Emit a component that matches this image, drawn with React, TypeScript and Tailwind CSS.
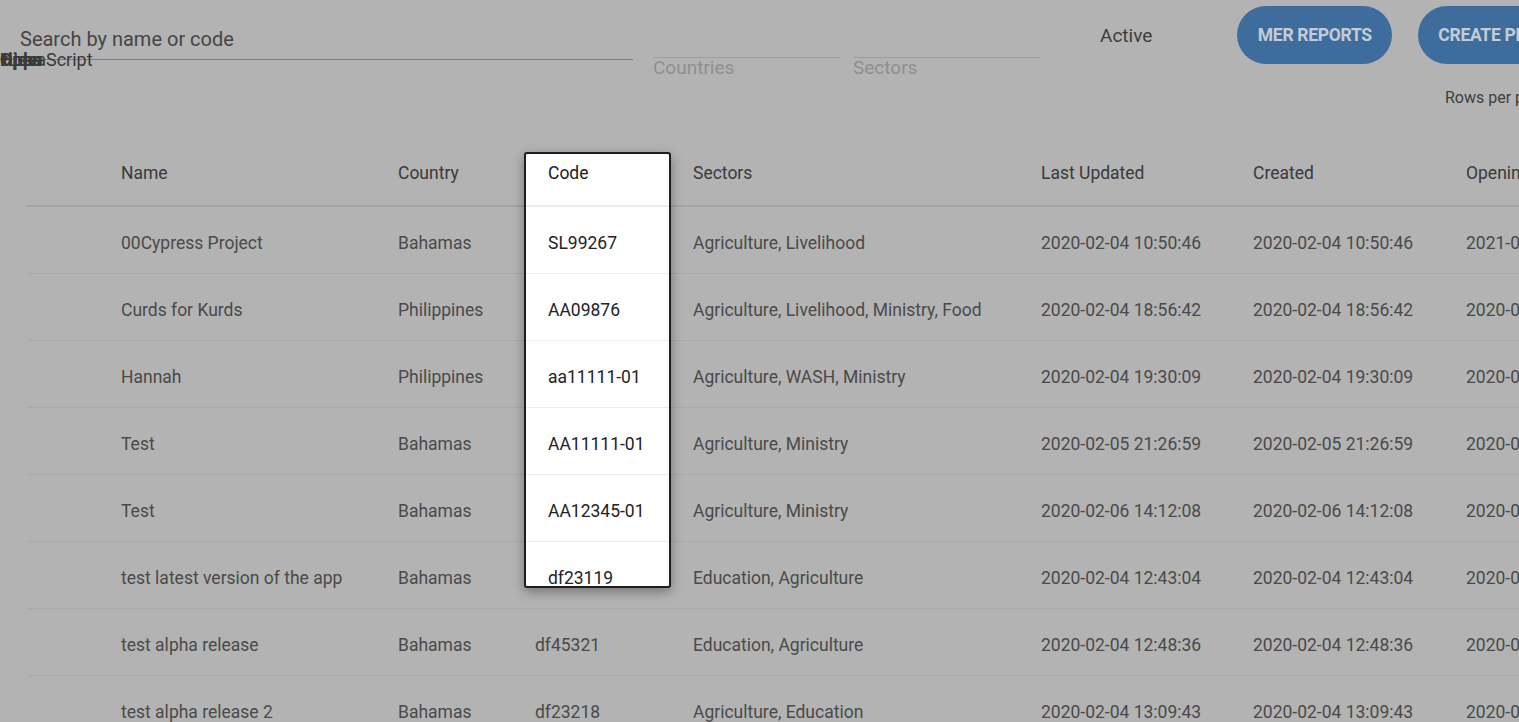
const rows = [
  ["00Cypress Project", "Bahamas", "SL99267", "Agriculture, Livelihood", "2020-02-04 10:50:46", "2020-02-04 10:50:46", "2021-02-04"],
  ["Curds for Kurds", "Philippines", "AA09876", "Agriculture, Livelihood, Ministry, Food", "2020-02-04 18:56:42", "2020-02-04 18:56:42", "2020-02-04"],
  ["Hannah", "Philippines", "aa11111-01", "Agriculture, WASH, Ministry", "2020-02-04 19:30:09", "2020-02-04 19:30:09", "2020-02-04"],
  ["Test", "Bahamas", "AA11111-01", "Agriculture, Ministry", "2020-02-05 21:26:59", "2020-02-05 21:26:59", "2020-02-05"],
  ["Test", "Bahamas", "AA12345-01", "Agriculture, Ministry", "2020-02-06 14:12:08", "2020-02-06 14:12:08", "2020-02-06"],
  ["test latest version of the app", "Bahamas", "df23119", "Education, Agriculture", "2020-02-04 12:43:04", "2020-02-04 12:43:04", "2020-02-04"],
  ["test alpha release", "Bahamas", "df45321", "Education, Agriculture", "2020-02-04 12:48:36", "2020-02-04 12:48:36", "2020-02-04"],
  ["test alpha release 2", "Bahamas", "df23218", "Agriculture, Education", "2020-02-04 13:09:43", "2020-02-04 13:09:43", "2020-02-04"],
];

const headers = ["Name", "Country", "Code", "Sectors", "Last Updated", "Created", "Opening Date"];

// column grid: spacer, name, country, code, sectors, last updated, created, opening
const cols = "grid grid-cols-[78px_277px_137px_158px_348px_212px_213px_200px]";

export default function App() {
  return (
    <div className="relative w-[1519px] h-[722px] overflow-hidden bg-[#b3b3b3] font-['Roboto',sans-serif]">
      {/* filter bar */}
      <div className="flex items-start h-[140px]">
        {/* search */}
        <div className="relative w-[633px] shrink-0 pt-[26px]">
          <div className="pl-5 text-[20px] leading-[26px] text-[#454545]">Search by name or code</div>
          <div className="mt-[7px] h-px bg-[#7d7d7d]" />
          {/* overlapped toolbar labels */}
          <div className="absolute left-0 top-[50px] text-[18px] leading-5 text-[#3a3a3a]">
            <span className="absolute left-0 top-0 whitespace-nowrap font-bold">Hide</span>
            <span className="absolute left-0 top-0 whitespace-nowrap font-bold">Open</span>
            <span className="absolute left-[2px] top-0 whitespace-nowrap font-bold">tipps</span>
            <span className="absolute left-[8px] top-0 whitespace-nowrap">JavaScript</span>
          </div>
        </div>

        {/* countries */}
        <div className="ml-5 w-[187px] shrink-0 pt-[57px]">
          <div className="h-px bg-[#9d9d9d]" />
          <div className="text-[19px] leading-5 text-[#8f8f8f]">Countries</div>
        </div>

        {/* sectors */}
        <div className="ml-[13px] w-[187px] shrink-0 pt-[57px]">
          <div className="h-px bg-[#9d9d9d]" />
          <div className="text-[19px] leading-5 text-[#8f8f8f]">Sectors</div>
        </div>

        <div className="ml-[60px] pt-[25px] text-[19px] leading-[22px] text-[#3e3e3e]">Active</div>

        <div className="ml-[85px] flex gap-[26px] pt-[6px]">
          <button className="h-[58px] w-[155px] shrink-0 rounded-full bg-[#3e6c9c] text-[17.5px] font-bold text-[#c3ccd6] tracking-[-0.3px]">
            MER REPORTS
          </button>
          <button className="h-[58px] w-[170px] shrink-0 rounded-full bg-[#3e6c9c] pl-5 text-left text-[17.5px] font-bold text-[#c3ccd6] tracking-[-0.3px] whitespace-nowrap">
            CREATE PROJECT
          </button>
        </div>
      </div>

      {/* rows per page label */}
      <div className="absolute left-[1445px] top-[88px] whitespace-nowrap text-[16px] leading-5 text-[#3e3e3e]">Rows per page:</div>

      {/* table */}
      <div className="ml-[27px] text-[17.5px]">
        <div className={`${cols} h-[67px] items-center border-b-2 border-[#a3a3a3] pt-[2px] text-[#3a3a3a]`}>
          <div />
          {headers.map((h, i) => (
            <div key={h} className={`${i === 2 ? "pl-[29px]" : "pl-4"} whitespace-nowrap`}>{h}</div>
          ))}
        </div>
        {rows.map((r, ri) => (
          <div key={ri} className={`${cols} h-[67px] items-center border-b border-[#a9a9a9] pt-[7px] text-[#4a4a4a]`}>
            <div />
            {r.map((c, ci) => (
              <div key={ci} className="pl-4 whitespace-nowrap">{c}</div>
            ))}
          </div>
        ))}
      </div>

      {/* dragged code column */}
      <div className="absolute left-[524px] top-[152px] w-[147px] h-[436px] overflow-hidden rounded-[3px] border-2 border-[#1e1e1e] bg-white shadow-[0_4px_12px_rgba(0,0,0,0.35)] text-[17.5px]">
        <div className="-mt-[14px]">
          <div className="flex h-[67px] items-center border-b-2 border-[#ececec] pt-[2px] pl-[22px] text-[#1a1a1a]">Code</div>
          {rows.map((r, ri) => (
            <div key={ri} className="flex h-[67px] items-center border-b border-[#ececec] pt-[7px] pl-[22px] text-[#232323]">
              {r[2]}
            </div>
          ))}
        </div>
      </div>
    </div>
  );
}
